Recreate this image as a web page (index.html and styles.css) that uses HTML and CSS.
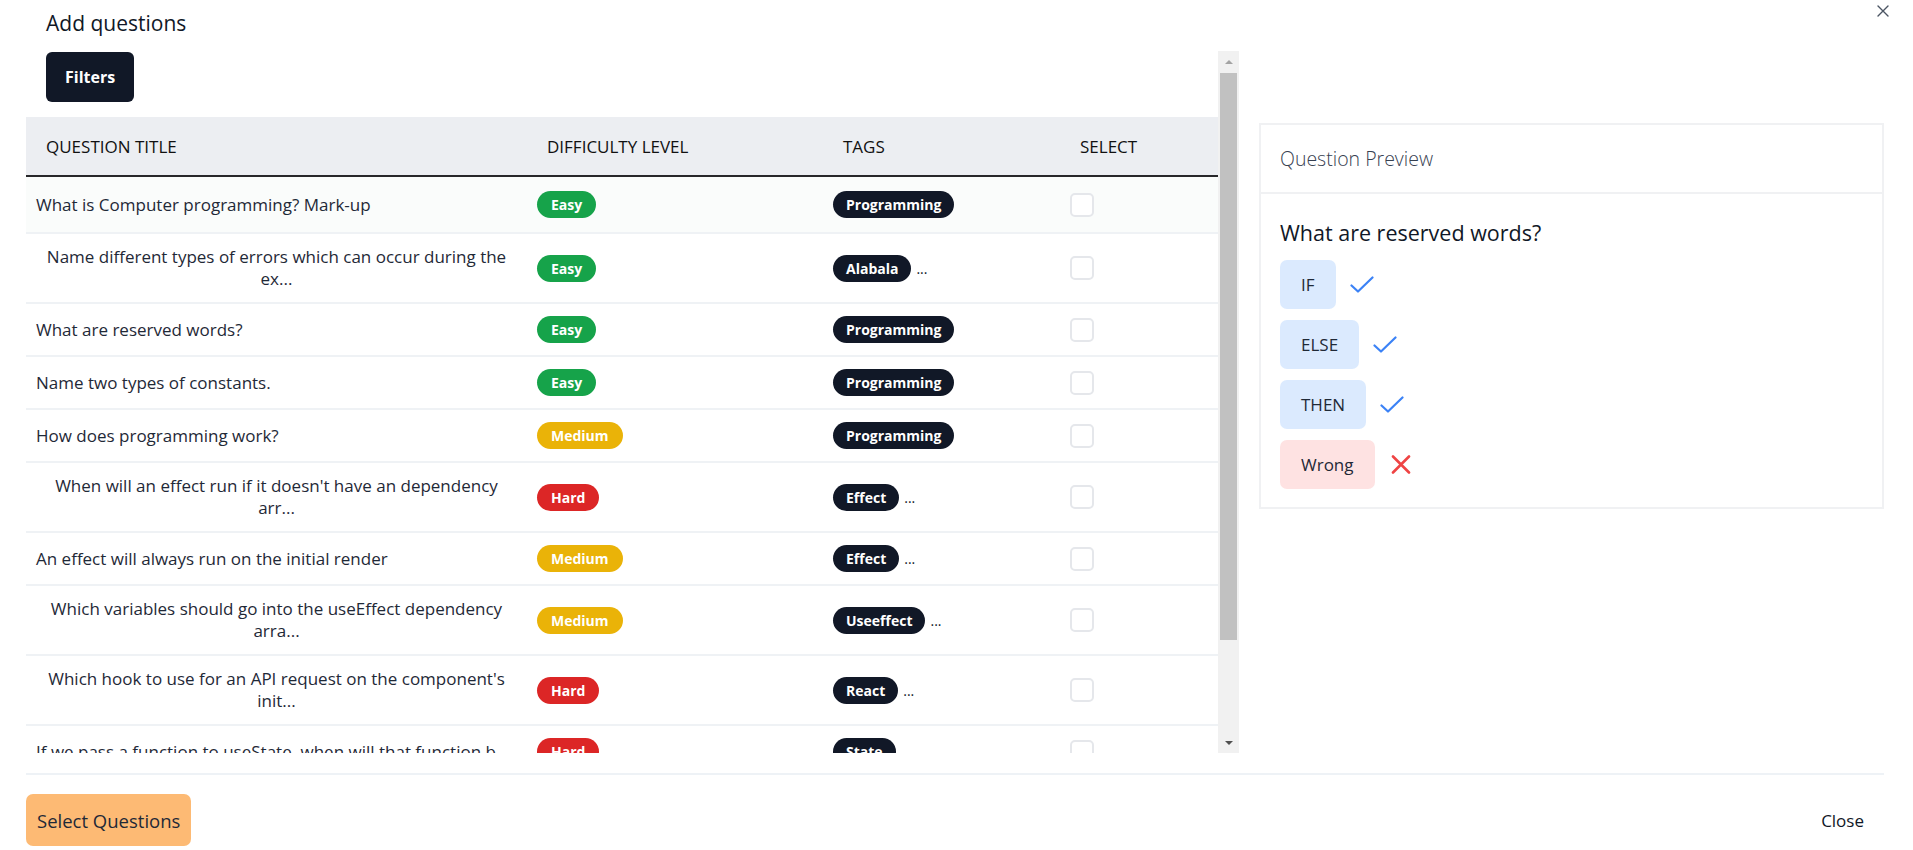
FILE: index.html
```html
<!DOCTYPE html>
<html lang="en">
<head>
<meta charset="utf-8">
<title>Add questions</title>
<link rel="stylesheet" href="styles.css">
</head>
<body>
<div class="modal">
  <header class="modal-head">
    <h2 class="modal-title">Add questions</h2>
    <button class="close-x" aria-label="Close">
      <svg width="12" height="12" viewBox="0 0 12 12"><path d="M1 1L11 11M11 1L1 11" stroke="#4b5563" stroke-width="1.4" fill="none" stroke-linecap="round"/></svg>
    </button>
  </header>

  <div class="modal-body">
    <div class="list-pane">
      <div class="list-scroll">
        <button class="filters-btn">Filters</button>
        <table class="q-table">
          <colgroup>
            <col class="c-title"><col class="c-diff"><col class="c-tags"><col class="c-sel">
          </colgroup>
          <thead>
            <tr><th>QUESTION TITLE</th><th>DIFFICULTY LEVEL</th><th>TAGS</th><th>SELECT</th></tr>
          </thead>
          <tbody>
            <tr class="active">
              <td class="t">What is Computer programming? Mark-up</td>
              <td><span class="badge easy">Easy</span></td>
              <td><span class="tag">Programming</span></td>
              <td><span class="cb"></span></td>
            </tr>
            <tr>
              <td class="t wrap">Name different types of errors which can occur during the ex...</td>
              <td><span class="badge easy">Easy</span></td>
              <td><span class="tag">Alabala</span><span class="more">...</span></td>
              <td><span class="cb"></span></td>
            </tr>
            <tr>
              <td class="t">What are reserved words?</td>
              <td><span class="badge easy">Easy</span></td>
              <td><span class="tag">Programming</span></td>
              <td><span class="cb"></span></td>
            </tr>
            <tr>
              <td class="t">Name two types of constants.</td>
              <td><span class="badge easy">Easy</span></td>
              <td><span class="tag">Programming</span></td>
              <td><span class="cb"></span></td>
            </tr>
            <tr>
              <td class="t">How does programming work?</td>
              <td><span class="badge medium">Medium</span></td>
              <td><span class="tag">Programming</span></td>
              <td><span class="cb"></span></td>
            </tr>
            <tr>
              <td class="t wrap">When will an effect run if it doesn't have an dependency arr...</td>
              <td><span class="badge hard">Hard</span></td>
              <td><span class="tag">Effect</span><span class="more">...</span></td>
              <td><span class="cb"></span></td>
            </tr>
            <tr>
              <td class="t">An effect will always run on the initial render</td>
              <td><span class="badge medium">Medium</span></td>
              <td><span class="tag">Effect</span><span class="more">...</span></td>
              <td><span class="cb"></span></td>
            </tr>
            <tr>
              <td class="t wrap">Which variables should go into the useEffect dependency arra...</td>
              <td><span class="badge medium">Medium</span></td>
              <td><span class="tag">Useeffect</span><span class="more">...</span></td>
              <td><span class="cb"></span></td>
            </tr>
            <tr>
              <td class="t wrap">Which hook to use for an API request on the component's init...</td>
              <td><span class="badge hard">Hard</span></td>
              <td><span class="tag">React</span><span class="more">...</span></td>
              <td><span class="cb"></span></td>
            </tr>
            <tr>
              <td class="t">If we pass a function to useState, when will that function b</td>
              <td><span class="badge hard">Hard</span></td>
              <td><span class="tag">State</span></td>
              <td><span class="cb"></span></td>
            </tr>
          </tbody>
        </table>
      </div>
      <div class="vscroll" aria-hidden="true">
        <span class="sb-btn"><span class="arrow up"></span></span>
        <span class="sb-track"><span class="sb-thumb"></span></span>
        <span class="sb-btn"><span class="arrow down"></span></span>
      </div>
    </div>

    <aside class="preview-col">
      <section class="preview-card">
        <div class="preview-head">Question Preview</div>
        <div class="preview-body">
          <h3 class="preview-q">What are reserved words?</h3>
          <ul class="answers">
            <li class="answer">
              <span class="ans-box right">IF</span>
              <svg class="ico" width="24" height="18" viewBox="0 0 24 18"><polyline points="1.5,9.5 8,15.5 22.5,1.5" fill="none" stroke="#3b82f6" stroke-width="2.2" stroke-linecap="round" stroke-linejoin="round"/></svg>
            </li>
            <li class="answer">
              <span class="ans-box right">ELSE</span>
              <svg class="ico" width="24" height="18" viewBox="0 0 24 18"><polyline points="1.5,9.5 8,15.5 22.5,1.5" fill="none" stroke="#3b82f6" stroke-width="2.2" stroke-linecap="round" stroke-linejoin="round"/></svg>
            </li>
            <li class="answer">
              <span class="ans-box right">THEN</span>
              <svg class="ico" width="24" height="18" viewBox="0 0 24 18"><polyline points="1.5,9.5 8,15.5 22.5,1.5" fill="none" stroke="#3b82f6" stroke-width="2.2" stroke-linecap="round" stroke-linejoin="round"/></svg>
            </li>
            <li class="answer">
              <span class="ans-box wrong">Wrong</span>
              <svg class="ico x" width="20" height="19" viewBox="0 0 20 19"><path d="M2 1.5L18 17.5M18 1.5L2 17.5" fill="none" stroke="#ef4444" stroke-width="2.6" stroke-linecap="round"/></svg>
            </li>
          </ul>
        </div>
      </section>
    </aside>
  </div>

  <footer class="modal-foot">
    <button class="select-btn">Select Questions</button>
    <button class="close-btn">Close</button>
  </footer>
</div>
</body>
</html>
```

FILE: styles.css
```css
* { box-sizing: border-box; }

html, body {
  margin: 0;
  padding: 0;
  background: #ffffff;
}

body {
  font-family: "Open Sans", "Noto Sans", "Liberation Sans", sans-serif;
  color: #1f2937;
  width: 1913px;
  height: 850px;
  overflow: hidden;
}

button {
  font-family: inherit;
  border: 0;
  cursor: pointer;
}

.modal {
  position: relative;
  height: 850px;
  padding: 0 29px 0 26px;
  display: flex;
  flex-direction: column;
}

/* header */
.modal-head {
  height: 51px;
  display: flex;
  align-items: flex-start;
}

.modal-title {
  margin: 9px 0 0 20px;
  font-size: 21px;
  line-height: 28px;
  font-weight: 400;
  color: #111827;
}

.close-x {
  position: absolute;
  top: 4px;
  right: 23px;
  width: 14px;
  height: 14px;
  padding: 1px;
  background: transparent;
  display: flex;
  align-items: center;
  justify-content: center;
}

/* body */
.modal-body {
  display: grid;
  grid-template-columns: 1213px 625px;
  column-gap: 20px;
  height: 702px;
}

.list-pane {
  height: 702px;
  display: flex;
}

.list-scroll {
  width: 1192px;
  height: 702px;
  overflow: hidden;
}

/* drawn scrollbar */
.vscroll {
  width: 21px;
  height: 702px;
  background: #f1f1f1;
  display: flex;
  flex-direction: column;
}

.sb-btn {
  height: 21px;
  flex: none;
  display: flex;
  align-items: center;
  justify-content: center;
}

.arrow {
  width: 0;
  height: 0;
  border-left: 4px solid transparent;
  border-right: 4px solid transparent;
}

.arrow.up { border-bottom: 4px solid #a3a3a3; }
.arrow.down { border-top: 4px solid #505050; }

.sb-track {
  flex: 1;
  padding: 1px 2px 0;
}

.sb-thumb {
  display: block;
  height: 567px;
  background: #c1c1c1;
}

.filters-btn {
  display: block;
  margin: 1px 0 15px 20px;
  height: 50px;
  padding: 0 19px;
  border-radius: 6px;
  background: #111827;
  color: #ffffff;
  font-size: 16px;
  font-weight: 700;
}

/* table */
.q-table {
  width: 1192px;
  border-collapse: collapse;
  table-layout: fixed;
}

.c-title { width: 501px; }
.c-diff { width: 296px; }
.c-tags { width: 237px; }
.c-sel { width: 158px; }

.q-table thead tr {
  background: #eceef2;
  border-bottom: 2px solid #27272a;
}

.q-table th {
  height: 59px;
  padding: 0 20px;
  text-align: left;
  font-size: 17px;
  font-weight: 400;
  color: #111111;
}

.q-table tbody tr {
  border-bottom: 2px solid #eff2f5;
}

.q-table tbody tr.active {
  background: #fafcfb;
}

.q-table tbody tr.active td {
  padding-top: 14px;
  padding-bottom: 14px;
}

.q-table td {
  padding: 12px 10px;
  vertical-align: middle;
  font-size: 17px;
  line-height: 23px;
  color: #1f2937;
}

.q-table td.t { text-align: left; }
.q-table td.t.wrap {
  text-align: center;
  line-height: 22px;
}

.badge,
.tag {
  display: inline-flex;
  align-items: center;
  height: 27px;
  padding: 0 14px;
  border-radius: 14px;
  font-size: 14px;
  font-weight: 700;
  color: #ffffff;
  vertical-align: middle;
}

.badge.easy { background: #16a34a; }
.badge.medium { background: #eab308; }
.badge.hard { background: #dc2626; }

.tag {
  background: #111827;
  padding: 0 13px;
}

.more {
  margin-left: 5px;
  font-size: 14px;
  color: #111827;
  vertical-align: middle;
}

.cb {
  display: block;
  width: 24px;
  height: 24px;
  border: 2px solid #e5e7eb;
  border-radius: 5px;
  background: #ffffff;
}

/* preview */
.preview-col {
  padding-top: 72px;
}

.preview-card {
  border: 2px solid #f0f1f3;
}

.preview-head {
  height: 69px;
  padding: 0 19px;
  display: flex;
  align-items: center;
  border-bottom: 2px solid #f0f1f3;
  font-size: 19.5px;
  font-weight: 300;
  color: #374151;
}

.preview-body {
  padding: 24px 19px 18px;
}

.preview-q {
  margin: 0 0 12px;
  font-size: 21.5px;
  line-height: 30px;
  font-weight: 500;
  color: #111827;
}

.answers {
  list-style: none;
  margin: 0;
  padding: 0;
  display: flex;
  flex-direction: column;
  gap: 11px;
}

.answer {
  display: flex;
  align-items: center;
  gap: 14px;
}

.ans-box {
  display: inline-flex;
  align-items: center;
  height: 49px;
  padding: 0 21px;
  border-radius: 7px;
  font-size: 17px;
  color: #1f2937;
}

.ans-box.right { background: #dbeafe; }
.ans-box.wrong { background: #fee2e2; }

.ico { display: block; }
.ico.x { margin-left: 2px; }

/* footer */
.modal-foot {
  margin-top: 20px;
  border-top: 2px solid #eef2f6;
  padding-top: 19px;
  display: flex;
  align-items: center;
  justify-content: space-between;
}

.select-btn {
  height: 52px;
  padding: 0 11px;
  border-radius: 7px;
  background: #fdba74;
  color: #1f2937;
  font-size: 18.5px;
}

.close-btn {
  margin-right: 20px;
  background: transparent;
  color: #111827;
  font-size: 17px;
  padding: 0;
}
```
